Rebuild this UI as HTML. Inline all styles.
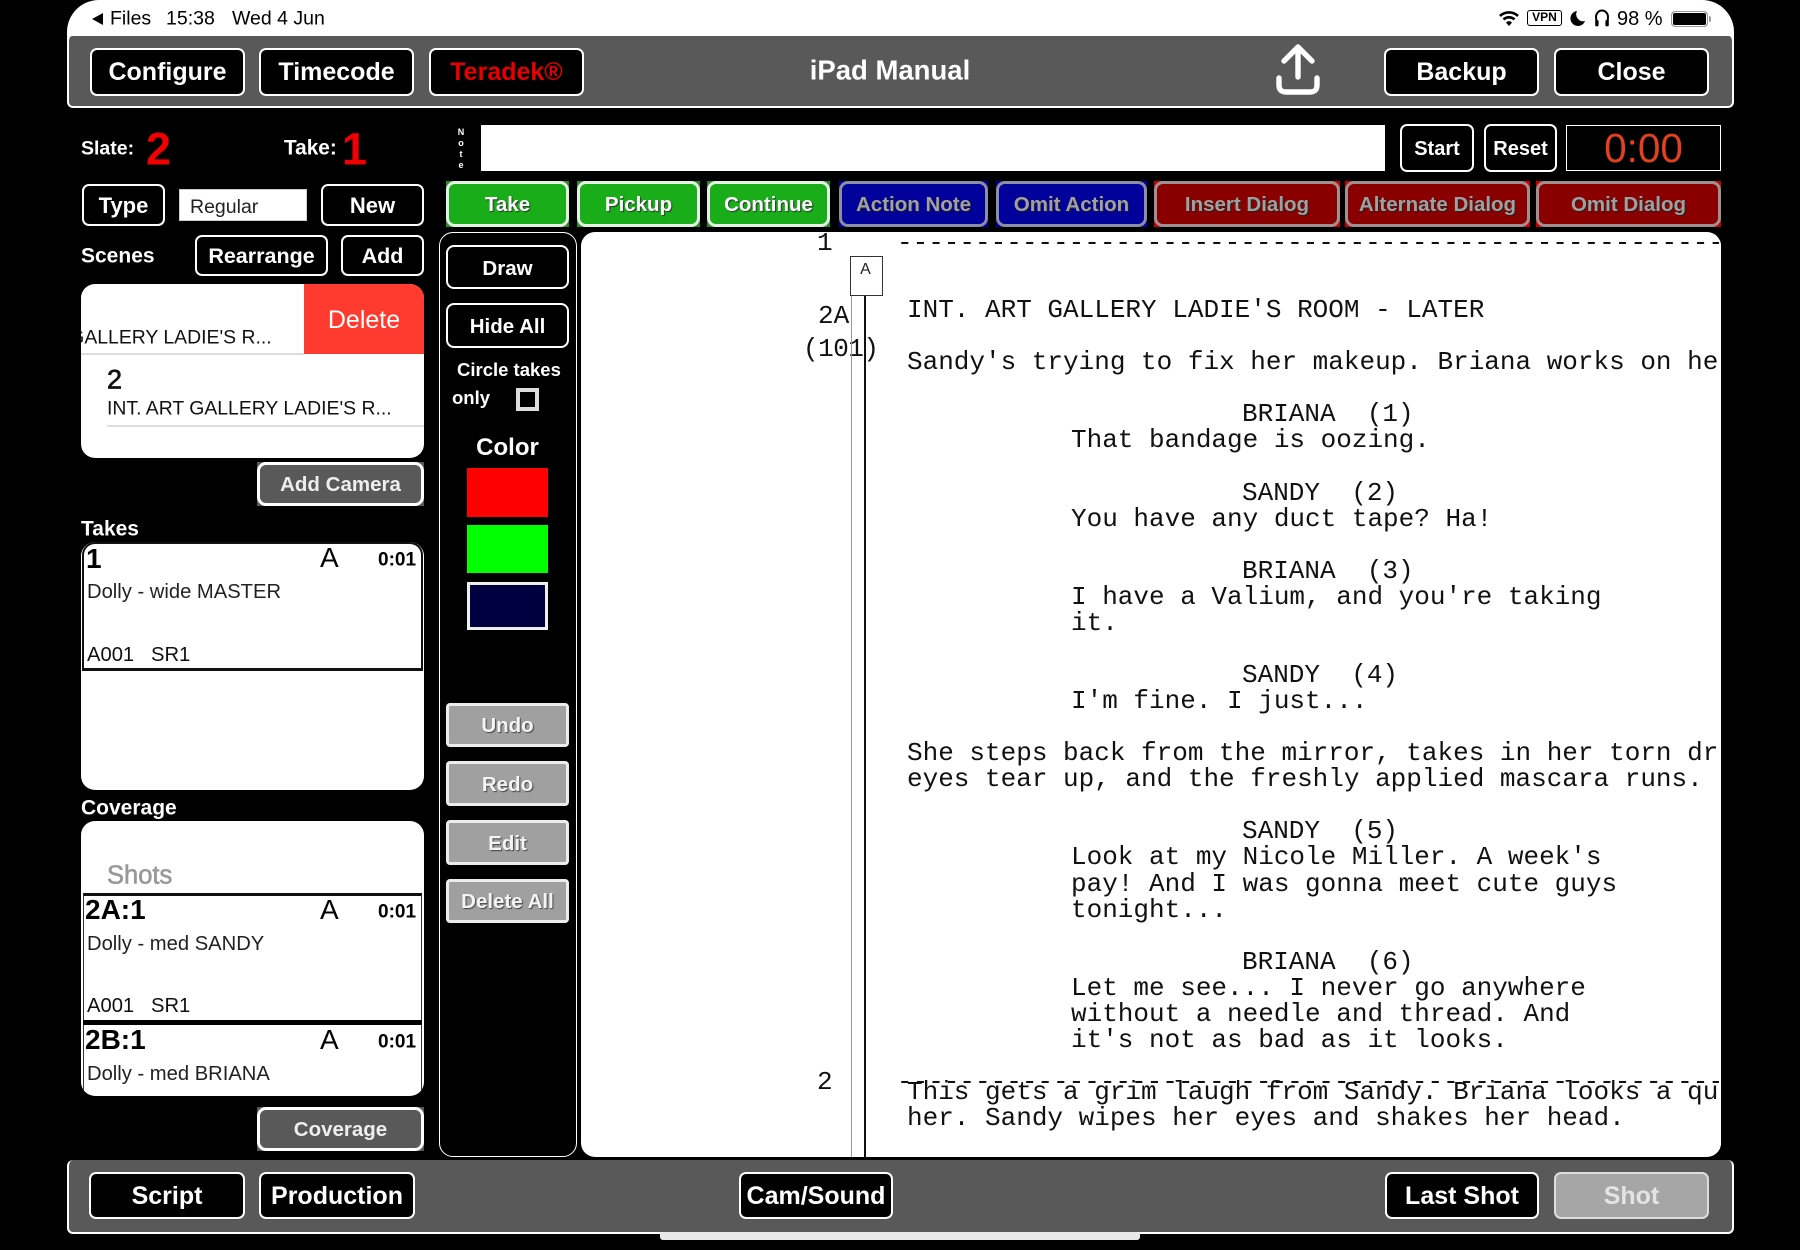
<!DOCTYPE html>
<html><head><meta charset="utf-8"><style>
html,body{margin:0;padding:0;background:#000}
#p{position:relative;width:1800px;height:1250px;overflow:hidden;background:#000;font-family:"Liberation Sans",sans-serif}
#p div{box-sizing:border-box}
.a{position:absolute}
.t{position:absolute;line-height:1;white-space:pre;transform:translateY(-50%)}
.b{position:absolute;display:flex;align-items:center;justify-content:center;background:#000;color:#fff;border:2.5px solid #fff;border-radius:7px;font-weight:bold;white-space:pre;padding-top:2px}
.top{font-size:25px}
.tb{padding-top:0}
.m{font-size:22px}
.act{font-size:20.5px;border-width:3px;border-radius:9px}
.g{background:#19ad19;border-color:#e4f2e4;text-shadow:1px 1px 1px #333}
.bl{background:#00009a;border-color:#8d8da6;color:#a0a0a0;text-shadow:1px 1px 1px #222}
.r{background:#8a0000;border-color:#a09090;color:#a0a0a0;text-shadow:1px 1px 1px #222}
.gr{background:#595959;color:#eee;font-size:20.5px;border-width:3px;border-radius:9px}
.u{background:#a0a0a0;border-color:#ececec;border-width:3px;border-radius:4px;font-size:20.5px;text-shadow:1px 1px 1px #444;color:#f4f4f4}
.d{font-size:20.5px;border-radius:8px;padding-top:3px}
.w{background:#fff;position:absolute}
.lab{color:#fff;font-weight:bold;font-size:21px}
.k{color:#000}
.s{font-family:"Liberation Mono",monospace;font-size:26px;color:#111;position:absolute;line-height:26px;white-space:pre;transform:translateY(calc(-50% + 1px))}
</style></head><body><div id="p">

<!-- status bar -->
<div class="a" style="left:67px;top:0;width:1667px;height:40px;background:#fff;border-radius:32px 32px 0 0"></div>
<svg class="a" style="left:91px;top:12px" width="14" height="14"><path d="M12 1 L12 13 L1 7 Z" fill="#000"/></svg>
<div class="t k" style="left:110px;top:19px;font-size:19.5px">Files</div>
<div class="t k" style="left:166px;top:19px;font-size:19.5px">15:38</div>
<div class="t k" style="left:232px;top:19px;font-size:19.5px">Wed 4 Jun</div>
<svg class="a" style="left:1498px;top:9px" width="22" height="18" viewBox="0 0 22 18"><path d="M2 7 A13 13 0 0 1 20 7 M5.5 10.5 A8 8 0 0 1 16.5 10.5" fill="none" stroke="#000" stroke-width="2.6"/><path d="M8 13.5 A4 4 0 0 1 14 13.5 L11 17 Z" fill="#000"/></svg>
<div class="a" style="left:1527px;top:10px;width:35px;height:16px;border:1.5px solid #000;border-radius:3px;font-size:12px;font-weight:bold;line-height:13px;text-align:center;color:#000">VPN</div>
<svg class="a" style="left:1570px;top:10px" width="16" height="16" viewBox="0 0 16 16"><path d="M7 1 A7.5 7.5 0 1 0 15 11 A7 7 0 0 1 7 1 Z" fill="#000"/></svg>
<svg class="a" style="left:1594px;top:9px" width="16" height="18" viewBox="0 0 16 18"><path d="M2.5 14 L2 8 A6 6.5 0 0 1 14 8 L13.5 14" fill="none" stroke="#000" stroke-width="2"/><rect x="1.2" y="11" width="3.4" height="6.4" rx="1.4" fill="#000"/><rect x="11.4" y="11" width="3.4" height="6.4" rx="1.4" fill="#000"/></svg>
<div class="t k" style="left:1617px;top:19px;font-size:20px">98 %</div>
<div class="a" style="left:1671px;top:11px;width:37px;height:16px;border:1.5px solid #999;border-radius:4px;background:#000;box-shadow:inset 0 0 0 1px #fff"></div>
<div class="a" style="left:1709px;top:16px;width:2px;height:6px;background:#999;border-radius:0 2px 2px 0"></div>

<!-- top bar -->
<div class="a" style="left:67px;top:36px;width:1667px;height:72px;background:#595959;border:2px solid #fff;border-top:0;border-radius:5px 5px 6px 6px"></div>
<div class="b top tb" style="left:90px;top:48px;width:155px;height:48px">Configure</div>
<div class="b top tb" style="left:259px;top:48px;width:155px;height:48px">Timecode</div>
<div class="b top tb" style="left:429px;top:48px;width:155px;height:48px;color:#e60000">Teradek®</div>
<div class="t" style="left:809px;top:70px;width:162px;text-align:center;font-size:27.5px;font-weight:bold;color:#fff">iPad Manual</div>
<svg class="a" style="left:1272px;top:41px" width="52" height="56" viewBox="0 0 52 56"><path d="M26 7 L26 36 M12 20 L26 6 L40 20" fill="none" stroke="#fff" stroke-width="5.4" stroke-linecap="round" stroke-linejoin="round"/><path d="M7 37 L7 44 Q7 51 14 51 L38 51 Q45 51 45 44 L45 37" fill="none" stroke="#fff" stroke-width="5.4" stroke-linecap="round"/></svg>
<div class="b top tb" style="left:1384px;top:48px;width:155px;height:48px">Backup</div>
<div class="b top tb" style="left:1554px;top:48px;width:155px;height:48px">Close</div>

<!-- slate -->
<div class="t" style="left:81px;top:149px;font-size:19.5px;font-weight:bold;color:#fff">Slate:</div>
<div class="t" style="left:146px;top:149px;font-size:45px;font-weight:bold;color:#f00000">2</div>
<div class="t" style="left:284px;top:149px;font-size:20.8px;font-weight:bold;color:#fff">Take:</div>
<div class="t" style="left:342px;top:149px;font-size:45px;font-weight:bold;color:#f00000">1</div>
<div class="a" style="left:455px;top:127px;width:12px;font-size:9px;line-height:11px;font-weight:bold;color:#fff;text-align:center">N<br>o<br>t<br>e</div>
<div class="w" style="left:481px;top:125px;width:904px;height:46px"></div>
<div class="b" style="left:1400px;top:124px;width:74px;height:48px;font-size:20px;padding-top:3px">Start</div>
<div class="b" style="left:1484px;top:124px;width:73px;height:48px;font-size:20px;padding-top:3px">Reset</div>
<div class="a" style="left:1566px;top:125px;width:155px;height:46px;border:1.5px solid #fff;background:#000;color:#e2401f;font-size:40.5px;line-height:44px;text-align:center">0:00</div>

<!-- row 3 -->
<div class="b m" style="left:82px;top:184px;width:83px;height:42px">Type</div>
<div class="a" style="left:179px;top:189px;width:128px;height:32px;background:#fff;border:1.5px solid #ccc;color:#222;font-size:19.5px;line-height:35px;padding-left:10px">Regular</div>
<div class="b m" style="left:321px;top:184px;width:103px;height:42px">New</div>

<div class="a" style="left:446px;top:181px;width:123px;height:46px;background:#2a8a2a"></div>
<div class="a" style="left:577px;top:181px;width:123px;height:46px;background:#2a8a2a"></div>
<div class="a" style="left:707px;top:181px;width:123px;height:46px;background:#2a8a2a"></div>
<div class="a" style="left:839px;top:181px;width:149px;height:46px;background:#00009a"></div>
<div class="a" style="left:996px;top:181px;width:151px;height:46px;background:#00009a"></div>
<div class="a" style="left:1154px;top:181px;width:186px;height:46px;background:#c80000"></div>
<div class="a" style="left:1345px;top:181px;width:185px;height:46px;background:#c80000"></div>
<div class="a" style="left:1536px;top:181px;width:185px;height:46px;background:#c80000"></div>
<div class="b act g" style="left:446px;top:181px;width:123px;height:46px">Take</div>
<div class="b act g" style="left:577px;top:181px;width:123px;height:46px">Pickup</div>
<div class="b act g" style="left:707px;top:181px;width:123px;height:46px">Continue</div>
<div class="b act bl" style="left:839px;top:181px;width:149px;height:46px">Action Note</div>
<div class="b act bl" style="left:996px;top:181px;width:151px;height:46px">Omit Action</div>
<div class="b act r" style="left:1154px;top:181px;width:186px;height:46px">Insert Dialog</div>
<div class="b act r" style="left:1345px;top:181px;width:185px;height:46px">Alternate Dialog</div>
<div class="b act r" style="left:1536px;top:181px;width:185px;height:46px">Omit Dialog</div>

<!-- scenes -->
<div class="t lab" style="left:81px;top:256px">Scenes</div>
<div class="b" style="left:195px;top:235px;width:133px;height:41px;font-size:21.5px">Rearrange</div>
<div class="b" style="left:341px;top:235px;width:83px;height:41px;font-size:21.5px">Add</div>
<div class="w" style="left:81px;top:284px;width:343px;height:174px;border-radius:14px;overflow:hidden">
  <div class="t" style="left:-94px;top:54px;font-size:19.4px;color:#111">INT. ART GALLERY LADIE'S R...</div>
  <div class="a" style="left:0;top:69px;width:223px;height:1.5px;background:#ddd"></div>
  <div class="a" style="left:223px;top:0;width:120px;height:70px;background:#ff3b30;color:#fff;font-size:25px;line-height:72px;text-align:center">Delete</div>
  <div class="t" style="left:26px;top:96px;font-size:27px;color:#111;-webkit-text-stroke:.7px #111">2</div>
  <div class="t" style="left:26px;top:125px;font-size:19.4px;color:#111">INT. ART GALLERY LADIE'S R...</div>
  <div class="a" style="left:26px;top:141px;width:317px;height:1.5px;background:#ddd"></div>
</div>
<div class="a" style="left:257px;top:462px;width:167px;height:44px;background:#595959"></div>
<div class="b gr" style="left:257px;top:462px;width:167px;height:44px">Add Camera</div>

<!-- takes -->
<div class="t lab" style="left:81px;top:529px">Takes</div>
<div class="w" style="left:81px;top:542px;width:343px;height:248px;border-radius:14px"></div>
<div class="a" style="left:82px;top:542px;width:341px;height:129px;border:2px solid #111;border-bottom-width:3.5px;border-radius:13px 13px 0 0"></div>
<div class="t k" style="left:86px;top:559px;font-size:28px;font-weight:bold">1</div>
<div class="t k" style="left:320px;top:558px;font-size:28px">A</div>
<div class="t k" style="left:378px;top:560px;font-size:19px;font-weight:bold">0:01</div>
<div class="t k" style="left:87px;top:592px;font-size:20.2px;color:#222">Dolly - wide MASTER</div>
<div class="t k" style="left:87px;top:655px;font-size:20.2px;color:#111">A001   SR1</div>

<!-- coverage -->
<div class="t lab" style="left:81px;top:808px">Coverage</div>
<div class="w" style="left:81px;top:821px;width:343px;height:275px;border-radius:14px;overflow:hidden">
  <div class="t" style="left:26px;top:55px;font-size:25.5px;color:#999;-webkit-text-stroke:.6px #999">Shots</div>
  <div class="a" style="left:2px;top:72px;width:339px;height:208px;border:1.5px solid #333;border-top:3px solid #111;border-radius:0"></div>
  <div class="a" style="left:2px;top:199px;width:339px;height:5px;background:#000"></div>
</div>
<div class="t k" style="left:85px;top:910px;font-size:28px;font-weight:bold">2A:1</div>
<div class="t k" style="left:320px;top:910px;font-size:28px">A</div>
<div class="t k" style="left:378px;top:912px;font-size:19px;font-weight:bold">0:01</div>
<div class="t k" style="left:87px;top:944px;font-size:20.2px;color:#222">Dolly - med SANDY</div>
<div class="t k" style="left:87px;top:1006px;font-size:20.2px;color:#111">A001   SR1</div>
<div class="t k" style="left:85px;top:1040px;font-size:28px;font-weight:bold">2B:1</div>
<div class="t k" style="left:320px;top:1040px;font-size:28px">A</div>
<div class="t k" style="left:378px;top:1042px;font-size:19px;font-weight:bold">0:01</div>
<div class="t k" style="left:87px;top:1074px;font-size:20.2px;color:#222">Dolly - med BRIANA</div>
<div class="a" style="left:257px;top:1107px;width:167px;height:44px;background:#595959"></div>
<div class="b gr" style="left:257px;top:1107px;width:167px;height:44px">Coverage</div>

<!-- tool panel -->
<div class="a" style="left:439px;top:232px;width:138px;height:925px;border:1.5px solid #fff;border-radius:14px"></div>
<div class="b d" style="left:446px;top:245px;width:123px;height:44px">Draw</div>
<div class="b d" style="left:446px;top:303px;width:123px;height:45px">Hide All</div>
<div class="t" style="left:457px;top:370px;font-size:18.5px;font-weight:bold;color:#fff">Circle takes</div>
<div class="t" style="left:452px;top:398px;font-size:18.5px;font-weight:bold;color:#fff">only</div>
<div class="a" style="left:516px;top:388px;width:23px;height:23px;border:4px solid #ddd"></div>
<div class="t" style="left:467px;top:448px;width:81px;text-align:center;font-size:24px;font-weight:bold;color:#fff">Color</div>
<div class="a" style="left:467px;top:468px;width:81px;height:49px;background:#f00"></div>
<div class="a" style="left:467px;top:525px;width:81px;height:48px;background:#0f0"></div>
<div class="a" style="left:467px;top:582px;width:81px;height:48px;background:#000040;border:3.5px solid #eee"></div>
<div class="b u" style="left:446px;top:703px;width:123px;height:44px">Undo</div>
<div class="b u" style="left:446px;top:761px;width:123px;height:45px">Redo</div>
<div class="b u" style="left:446px;top:820px;width:123px;height:45px">Edit</div>
<div class="b u" style="left:446px;top:879px;width:123px;height:44px">Delete All</div>

<!-- script -->
<div class="w" style="left:581px;top:232px;width:1140px;height:925px;border-radius:14px;overflow:hidden">
 <div class="a" style="left:1px;top:0;width:1139px;height:925px">
  <div class="s" style="left:315px;top:10px">-------------------------------------------------------------</div>
  <div class="s" style="left:315px;top:849px">-------------------------------------------------------------</div>
  <div class="s" style="left:235px;top:10px">1</div>
  <div class="s" style="left:235px;top:849px">2</div>
  <div class="s" style="left:236px;top:83px">2A</div>
  <div class="s" style="left:221px;top:116px;letter-spacing:-.5px">(101)</div>
  <div class="a" style="left:268.5px;top:63px;width:1.5px;height:862px;background:#999"></div>
  <div class="a" style="left:282px;top:63px;width:2px;height:862px;background:#111"></div>
  <div class="a" style="left:268px;top:24px;width:33px;height:40px;background:#fff;border:1.5px solid #333"></div>
  <div class="t" style="left:268px;top:38px;width:33px;text-align:center;font-size:16px;color:#222;padding-right:2px">A</div>

  <div class="s" style="left:325px;top:77px">INT. ART GALLERY LADIE'S ROOM - LATER</div>
  <div class="s" style="left:325px;top:129px">Sandy's trying to fix her makeup. Briana works on her</div>
  <div class="s" style="left:660px;top:181px">BRIANA  (1)</div>
  <div class="s" style="left:489px;top:207px">That bandage is oozing.</div>
  <div class="s" style="left:660px;top:260px">SANDY  (2)</div>
  <div class="s" style="left:489px;top:286px">You have any duct tape? Ha!</div>
  <div class="s" style="left:660px;top:338px">BRIANA  (3)</div>
  <div class="s" style="left:489px;top:364px">I have a Valium, and you're taking</div>
  <div class="s" style="left:489px;top:390px">it.</div>
  <div class="s" style="left:660px;top:442px">SANDY  (4)</div>
  <div class="s" style="left:489px;top:468px">I'm fine. I just...</div>
  <div class="s" style="left:325px;top:520px">She steps back from the mirror, takes in her torn dress.</div>
  <div class="s" style="left:325px;top:546px">eyes tear up, and the freshly applied mascara runs.</div>
  <div class="s" style="left:660px;top:598px">SANDY  (5)</div>
  <div class="s" style="left:489px;top:624px">Look at my Nicole Miller. A week's</div>
  <div class="s" style="left:489px;top:651px">pay! And I was gonna meet cute guys</div>
  <div class="s" style="left:489px;top:677px">tonight...</div>
  <div class="s" style="left:660px;top:729px">BRIANA  (6)</div>
  <div class="s" style="left:489px;top:755px">Let me see... I never go anywhere</div>
  <div class="s" style="left:489px;top:781px">without a needle and thread. And</div>
  <div class="s" style="left:489px;top:807px">it's not as bad as it looks.</div>
  <div class="s" style="left:325px;top:859px">This gets a grim laugh from Sandy. Briana looks a quick</div>
  <div class="s" style="left:325px;top:885px">her. Sandy wipes her eyes and shakes her head.</div>
 </div>
 <div class="a" style="left:1138px;top:0;width:2px;height:925px;background:#fff"></div>
</div>

<!-- bottom bar -->
<div class="a" style="left:67px;top:1160px;width:1667px;height:74px;background:#595959;border:2px solid #fff;border-top:0;border-radius:6px"></div>
<div class="b top" style="left:89px;top:1172px;width:156px;height:47px">Script</div>
<div class="b top" style="left:259px;top:1172px;width:156px;height:47px">Production</div>
<div class="b top" style="left:739px;top:1172px;width:154px;height:47px">Cam/Sound</div>
<div class="b top" style="left:1385px;top:1172px;width:154px;height:47px">Last Shot</div>
<div class="b top" style="left:1554px;top:1172px;width:155px;height:47px;background:#a6a6a6;border-color:#ddd;color:#e4e4e4">Shot</div>
<div class="a" style="left:660px;top:1232px;width:480px;height:8px;background:#e8e8e8;border-radius:0 0 3px 3px"></div>
</div></body></html>
